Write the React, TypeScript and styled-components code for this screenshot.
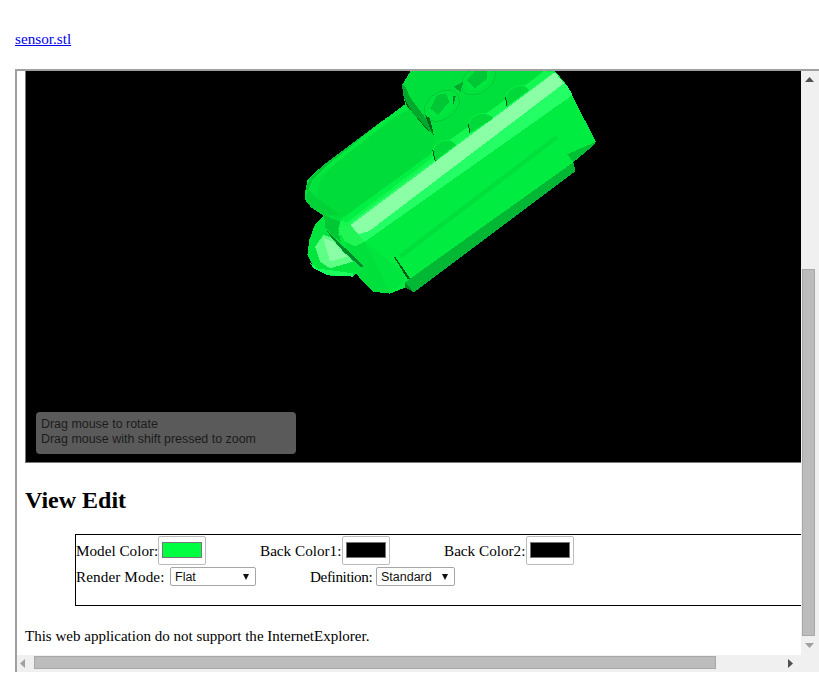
import React from "react";
import styled, { createGlobalStyle } from "styled-components";

const Global = createGlobalStyle`
  html, body { margin: 0; padding: 0; height: 100%; overflow: hidden; background: #fff; }
  body { font-family: "Liberation Serif", "Times New Roman", serif; font-size: 15.2px; color: #000; }
`;
const Page = styled.div`
  padding: 30px 0 0 15px;
  display: flex;
  flex-direction: column;
  align-items: flex-start;
`;
const FileLink = styled.a`
  color: #00e;
  text-decoration: underline;
  line-height: 18px;
  height: 18px;
  font-size: 15.2px;
  margin-bottom: 21px;
`;
const Frame = styled.div`
  width: 802px;
  height: 601px;
  border-top: 2px solid #a0a0a0;
  border-left: 2px solid #a0a0a0;
  display: grid;
  grid-template-columns: 784px 17px;
  grid-template-rows: 584px 17px;
  background: #f0f0f0;
`;
const Viewport = styled.div`
  overflow: hidden;
  background: #fff;
  padding-left: 8px;
`;
const Canvas = styled.div`
  position: relative;
  width: 776px;
  height: 392px;
  box-sizing: border-box;
  background: #000;
  border-left: 1px solid #777;
  border-bottom: 1px solid #777;
  overflow: hidden;
`;
const ModelSvg = styled.svg`
  display: block;
  position: absolute;
  left: -26px;
  top: -71px;
  width: 819px;
  height: 673px;
`;
const Legend = styled.div`
  position: absolute;
  left: 10px;
  top: 341px;
  width: 260px;
  height: 42px;
  box-sizing: border-box;
  padding: 5px;
  border-radius: 4px;
  background: #5a5a5a;
  color: #1c1c1c;
  font: 12.45px/15px "Liberation Sans", Arial, sans-serif;
`;
const Title = styled.h2`
  margin: 24px 0 20px;
  font-size: 24px;
  line-height: 27px;
  font-weight: bold;
`;
const Settings = styled.div`
  margin-left: 50px;
  width: 800px;
  height: 72px;
  box-sizing: border-box;
  border: 1px solid #000;
  display: flex;
  flex-direction: column;
`;
const SettingsRow = styled.div<{ $h: number }>`
  display: flex;
  align-items: center;
  height: ${(p) => p.$h}px;
`;
const Cell = styled.div<{ $w: number }>`
  width: ${(p) => p.$w}px;
  flex: none;
  display: flex;
  align-items: center;
`;
const Label = styled.span<{ $w: number; $ls?: number }>`
  width: ${(p) => p.$w}px;
  flex: none;
  padding-top: 2px;
  white-space: nowrap;
  letter-spacing: ${(p) => p.$ls ?? 0}px;
`;
const SwatchButton = styled.div`
  width: 48px;
  height: 29px;
  box-sizing: border-box;
  border: 1px solid #bbb;
  border-radius: 2px;
  background: #fff;
  display: flex;
  align-items: center;
  justify-content: center;
`;
const Swatch = styled.div<{ $c: string }>`
  width: 40px;
  height: 16px;
  box-sizing: border-box;
  border: 1px solid #777;
  background: ${(p) => p.$c};
`;
const SelectBox = styled.div<{ $w: number; $ml: number }>`
  position: relative;
  width: ${(p) => p.$w}px;
  height: 19px;
  margin-left: ${(p) => p.$ml}px;
  flex: none;
  &::after {
    content: "";
    position: absolute;
    right: 7px;
    top: 7px;
    border-left: 3.5px solid transparent;
    border-right: 3.5px solid transparent;
    border-top: 6px solid #111;
    pointer-events: none;
  }
`;
const Select = styled.select`
  appearance: none;
  width: 100%;
  height: 100%;
  box-sizing: border-box;
  display: block;
  margin: 0;
  padding: 1px 0 0 4px;
  border: 1px solid #a6a6a6;
  border-radius: 2px;
  background: #fff;
  color: #111;
  font: 12.5px "Liberation Sans", Arial, sans-serif;
`;
const Note = styled.p`
  margin: 21px 0 0;
  line-height: 18px;
  font-size: 15.03px;
`;
const VTrack = styled.div`
  background: #f0f0f0;
  position: relative;
`;
const VThumb = styled.div`
  position: absolute;
  left: 1px;
  top: 198px;
  width: 13px;
  height: 367px;
  background: #bcbcbc;
  border: 1px solid #a8a8a8;
  box-sizing: border-box;
`;
const HTrack = styled.div`
  background: #f0f0f0;
  position: relative;
`;
const HThumb = styled.div`
  position: absolute;
  left: 17px;
  top: 1px;
  width: 682px;
  height: 13px;
  background: #bcbcbc;
  border: 1px solid #a8a8a8;
  box-sizing: border-box;
`;
const Arrow = styled.svg<{ $x: number; $y: number }>`
  position: absolute;
  left: ${(p) => p.$x}px;
  top: ${(p) => p.$y}px;
  display: block;
`;

const S = (pts: string, fill: string) => <polygon points={pts} fill={fill} />;

const Bump = ({ d }: { d: string }) => <path d={d} fill="#00d93a" stroke="#00f044" strokeWidth="3" />;

function Model() {
  return (
    <ModelSvg viewBox="0 0 819 673" shapeRendering="crispEdges">
      <g transform="translate(290 65) scale(0.3333)">
        {/* silhouette base */}
        {S("45,385 52,345 100,300 345,118 336,60 362,18 795,18 830,60 918,230 832,268 850,292 857,318 372,682 345,668 300,686 250,680 210,640 150,560 100,450 47,410", "#00e03c")}
        {/* upper body */}
        {S("52,345 100,300 345,118 360,135 432,212 428,262 165,458 100,450 47,410 45,385", "#00dd3b")}
        {S("52,345 100,300 345,118 358,132 310,158 130,300 72,345 55,385 45,400", "#00ea3f")}
        {S("48,368 60,340 100,300 300,150 115,298 68,345 52,385", "#00c835")}
        {S("47,390 58,375 72,392 150,450 100,452 60,425", "#00d238")}
        {S("58,375 72,345 130,300 90,345 80,395", "#00e23c")}
        {/* rear block */}
        {S("362,18 336,60 340,92 350,122 432,212 760,18", "#00e03c")}
        {S("336,60 345,62 362,100 415,170 432,212 400,182 350,122 340,92", "#00a82c")}
        {S("340,92 350,122 400,182 432,212 415,195 365,140", "#005a18")}
        {/* main body */}
        {S("100,450 150,470 145,500 160,560 215,625 150,535 106,490", "#00c835")}
        {S("150,470 760,18 795,18 830,60 918,230 832,268 850,292 857,318 372,682 345,668 300,686 250,680 210,640 160,560 145,500", "#00ec40")}
        {S("150,470 300,375 428,262 750,30 760,18 790,22 185,475 170,510 145,510", "#14f750")}
        {S("150,465 430,262 440,268 170,472", "#00f044")}
        {S("185,470 790,22 830,60 848,90 225,530 175,510", "#24ff66")}
        {S("182,480 795,22 822,55 238,498 205,508", "#8bffa6")}
        {S("160,520 225,530 345,640 300,686 250,680 210,640", "#00e03c")}
        {S("225,530 345,625 340,640 300,686 260,600", "#00e63e")}
        {S("145,490 178,480 205,510 225,530 195,545 165,530", "#20f556")}
        {S("325,570 795,212 805,222 335,580", "#00e03c")}
        {S("345,652 850,292 857,318 372,682", "#00b833")}
        {S("832,268 918,230 912,240 850,292", "#00c034")}
        {S("345,652 372,682 345,668", "#008a28")}
        {S("310,573 316,576 360,640 353,643", "#005a18")}
        {/* rings */}
        <ellipse cx="455" cy="122" rx="58" ry="40" transform="rotate(-35 455 122)" fill="#00e23c" stroke="#00ca36" strokeWidth="3" />
        <ellipse cx="455" cy="122" rx="42" ry="27" transform="rotate(-35 455 122)" fill="#00e840" />
        {S("420,130 442,90 468,85 478,110 445,150", "#00c835")}
        {S("488,95 498,92 490,120", "#008a28")}
        <ellipse cx="565" cy="45" rx="56" ry="38" transform="rotate(-35 565 45)" fill="#00e23c" stroke="#00ca36" strokeWidth="3" />
        <ellipse cx="565" cy="45" rx="40" ry="26" transform="rotate(-35 565 45)" fill="#00e840" />
        {S("530,45 555,18 590,18 590,42 555,70", "#00c835")}
        {S("490,65 520,50 512,80", "#00a82c")}
        {S("405,150 420,160 432,212 418,185", "#006a1c")}
        {/* bumps */}
        <Bump d="M428,258 Q440,226 470,226 Q488,226 498,240 L436,288 Z" />
        <Bump d="M535,178 Q548,146 580,145 Q598,145 610,160 L540,205 Z" />
        <Bump d="M646,96 Q660,64 690,62 Q708,62 718,75 L652,124 Z" />
        {S("427,255 430,255 437,288 434,288", "#00501a")}
        {S("534,178 537,178 541,205 538,205", "#00501a")}
        {S("645,96 648,96 653,124 650,124", "#00501a")}
        {/* nose */}
        {S("52,570 58,525 75,478 102,450 106,490 150,530 220,600 215,618 190,632 120,632 70,605", "#00e63e")}
        {S("75,545 100,510 130,520 190,590 120,610 90,590", "#5dff85")}
        {S("100,520 130,530 170,575 120,590", "#8bffa6")}
        {S("58,590 80,610 190,625 190,635 110,630 70,610", "#1aff5c")}
        {S("110,495 220,603 214,607 160,560 118,510", "#008a2e")}
      </g>
    </ModelSvg>
  );
}

export default function App() {
  return (
    <Page>
      <Global />
      <FileLink href="#">sensor.stl</FileLink>
      <Frame>
        <Viewport>
          <Canvas>
            <Model />
            <Legend>
              Drag mouse to rotate
              <br />
              Drag mouse with shift pressed to zoom
            </Legend>
          </Canvas>
          <Title>View Edit</Title>
          <Settings>
            <SettingsRow $h={30}>
              <Cell $w={184}>
                <Label $w={82}>Model Color:</Label>
                <SwatchButton>
                  <Swatch $c="#00ff40" />
                </SwatchButton>
              </Cell>
              <Cell $w={184}>
                <Label $w={82}>Back Color1:</Label>
                <SwatchButton>
                  <Swatch $c="#000" />
                </SwatchButton>
              </Cell>
              <Cell $w={184}>
                <Label $w={82}>Back Color2:</Label>
                <SwatchButton>
                  <Swatch $c="#000" />
                </SwatchButton>
              </Cell>
            </SettingsRow>
            <SettingsRow $h={22}>
              <Cell $w={234}>
                <Label $w={89} $ls={0.1}>Render Mode:</Label>
                <SelectBox $w={86} $ml={5}>
                  <Select defaultValue="Flat">
                    <option>Flat</option>
                  </Select>
                </SelectBox>
              </Cell>
              <Cell $w={234}>
                <Label $w={61} $ls={-0.4}>Definition:</Label>
                <SelectBox $w={79} $ml={5}>
                  <Select defaultValue="Standard">
                    <option>Standard</option>
                  </Select>
                </SelectBox>
              </Cell>
            </SettingsRow>
          </Settings>
          <Note>This web application do not support the InternetExplorer.</Note>
        </Viewport>
        <VTrack>
          <Arrow $x={4} $y={6} width="9" height="6" viewBox="0 0 9 6">
            <path d="M4.5 0L9 5H0z" fill="#505050" />
          </Arrow>
          <VThumb />
          <Arrow $x={4} $y={572} width="9" height="6" viewBox="0 0 9 6">
            <path d="M0 0H9L4.5 5z" fill="#a0a0a0" />
          </Arrow>
        </VTrack>
        <HTrack>
          <Arrow $x={3} $y={4} width="6" height="9" viewBox="0 0 6 9">
            <path d="M5 0V9L0 4.5z" fill="#a0a0a0" />
          </Arrow>
          <HThumb />
          <Arrow $x={771} $y={4} width="6" height="9" viewBox="0 0 6 9">
            <path d="M0 0L5 4.5L0 9z" fill="#505050" />
          </Arrow>
        </HTrack>
        <HTrack />
      </Frame>
    </Page>
  );
}
